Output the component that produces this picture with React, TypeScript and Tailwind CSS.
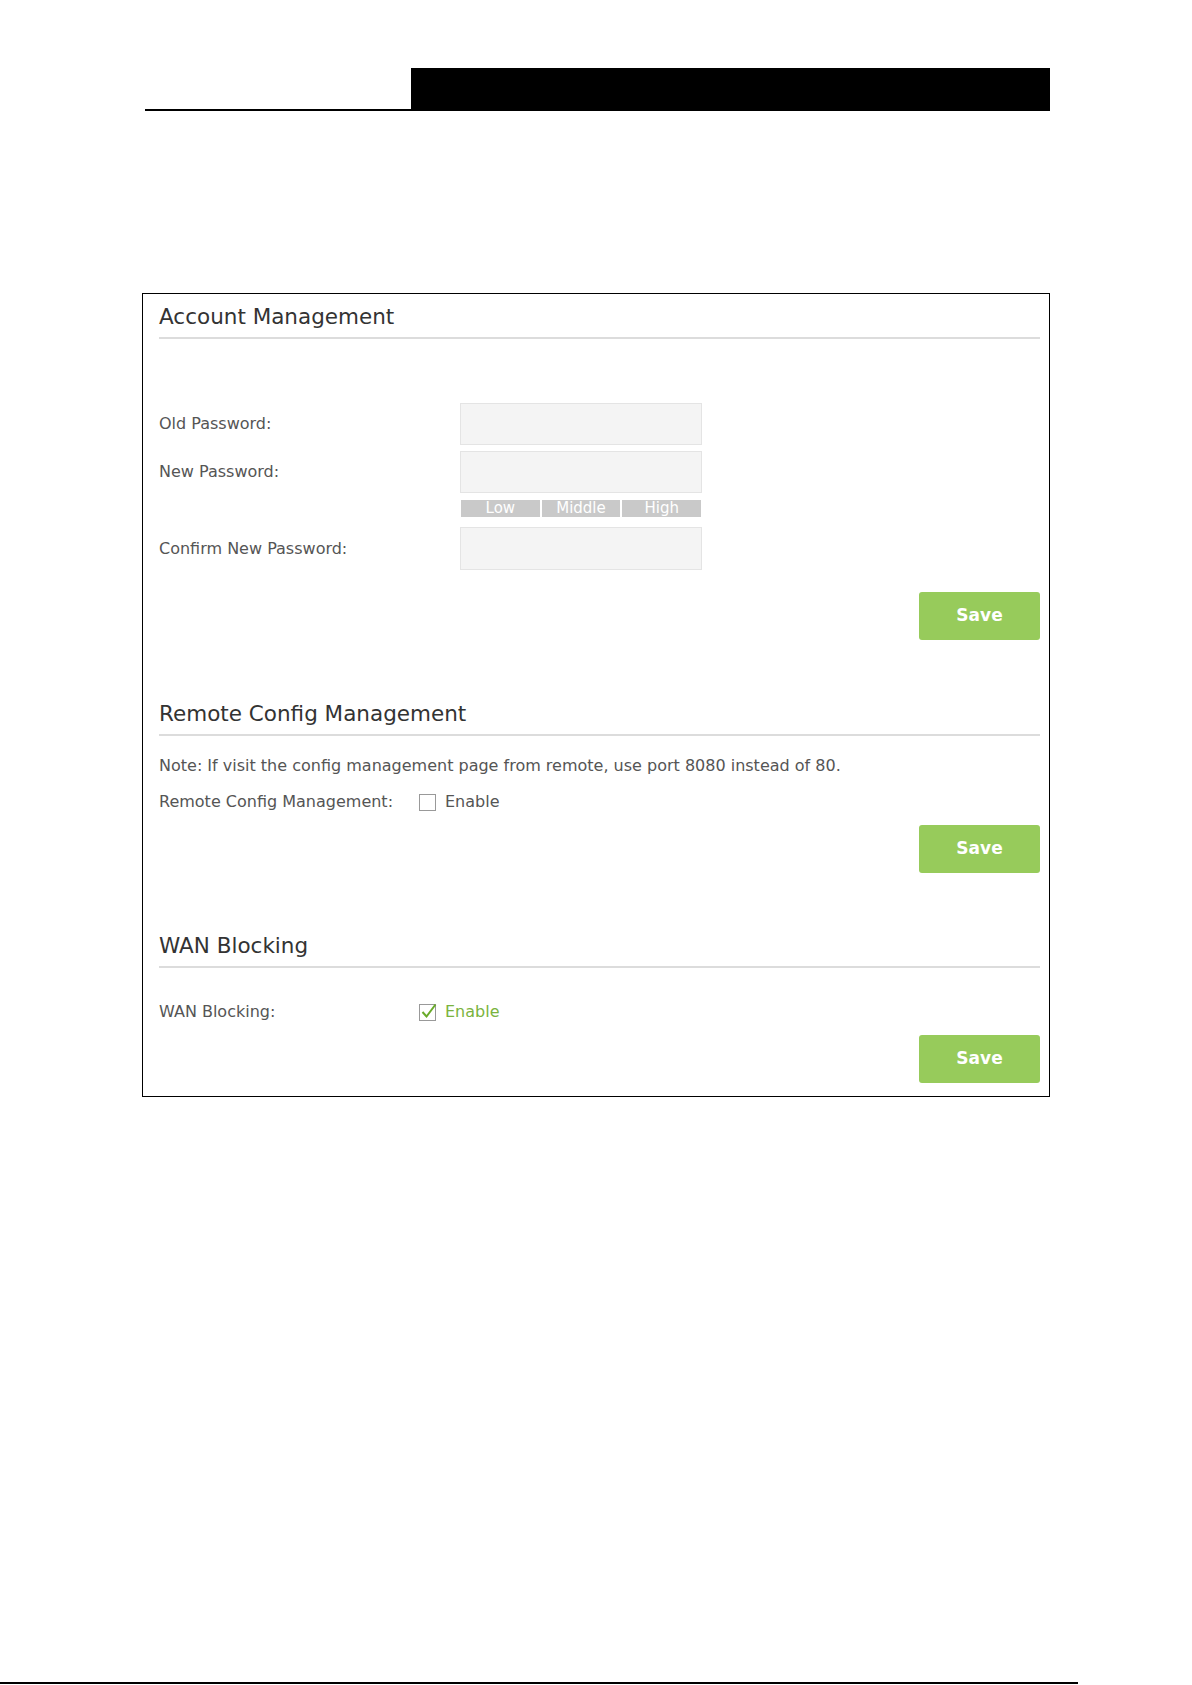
import React from "react";

const font = { fontFamily: '"DejaVu Sans", Verdana, sans-serif' };

function Field({ label, children }: { label: string; children: React.ReactNode }) {
  return (
    <div className="flex items-center">
      <div className="w-[301px] text-[16px] leading-[20px] text-[#555]">{label}</div>
      {children}
    </div>
  );
}

function Input() {
  return <div className="w-[242px] h-[42px] bg-[#f4f4f4] border border-[#e4e4e4]" />;
}

function Title({ children, className = "" }: { children: React.ReactNode; className?: string }) {
  return (
    <div className={"border-b-2 border-[#dcdcdc] pb-[6px] text-[21.5px] leading-[28px] text-[#333] " + className}>
      {children}
    </div>
  );
}

function SaveBtn({ className = "" }: { className?: string }) {
  return (
    <div className={"flex justify-end " + className}>
      <button className="w-[121px] h-[48px] rounded-[3px] bg-[#97cb5b] text-white text-[17px] font-bold">
        Save
      </button>
    </div>
  );
}

export default function App() {
  return (
    <div className="h-[1685px] flex flex-col bg-white" style={font}>
      <div className="mt-[68px] ml-[145px] flex items-end">
        <div className="w-[266px] h-[2px] bg-black" />
        <div className="w-[639px] h-[43px] bg-black" />
      </div>

      <div className="mt-[182px] ml-[142px] w-[908px] h-[804px] border border-black pl-[16px] pr-[9px] pt-[9px]">
        <Title>Account Management</Title>

        <div className="mt-[64px] flex flex-col">
          <Field label="Old Password:">
            <Input />
          </Field>
          <div className="mt-[6px]">
            <Field label="New Password:">
              <Input />
            </Field>
          </div>
          <div className="mt-[7px] ml-[302px] flex w-[240px] h-[17px] gap-[2px] text-white text-[15px] leading-[17px]">
            <div className="flex-1 bg-[#c9c9c9] text-center">Low</div>
            <div className="flex-1 bg-[#c9c9c9] text-center">Middle</div>
            <div className="flex-1 bg-[#c9c9c9] text-center">High</div>
          </div>
          <div className="mt-[10px]">
            <Field label="Confirm New Password:">
              <div className="w-[242px] h-[43px] bg-[#f4f4f4] border border-[#e4e4e4]" />
            </Field>
          </div>
        </div>
        <SaveBtn className="mt-[22px]" />

        <Title className="mt-[60px]">Remote Config Management</Title>
        <div className="mt-[20px] text-[16px] leading-[20px] text-[#555]">
          Note: If visit the config management page from remote, use port 8080 instead of 80.
        </div>
        <div className="mt-[16px] flex items-center text-[16px] leading-[20px] text-[#555]">
          <div className="w-[260px]">Remote Config Management:</div>
          <div className="w-[17px] h-[17px] border border-[#999] bg-white" />
          <span className="ml-[9px]">Enable</span>
        </div>
        <SaveBtn className="mt-[13px]" />

        <Title className="mt-[59px]">WAN Blocking</Title>
        <div className="mt-[34px] flex items-center text-[16px] leading-[20px] text-[#555]">
          <div className="w-[260px]">WAN Blocking:</div>
          <svg width="18" height="18" viewBox="0 0 18 18">
            <rect x="0.5" y="1.5" width="16" height="16" fill="white" stroke="#999" />
            <path d="M3.5 9 L7.5 13.5 L16.5 1.5" fill="none" stroke="#6aab2a" strokeWidth="2" />
          </svg>
          <span className="ml-[8px] text-[#7ab33e]">Enable</span>
        </div>
        <SaveBtn className="mt-[13px]" />
      </div>

      <div className="mt-auto mb-[1px] w-[1078px] h-[2px] bg-black" />
    </div>
  );
}
